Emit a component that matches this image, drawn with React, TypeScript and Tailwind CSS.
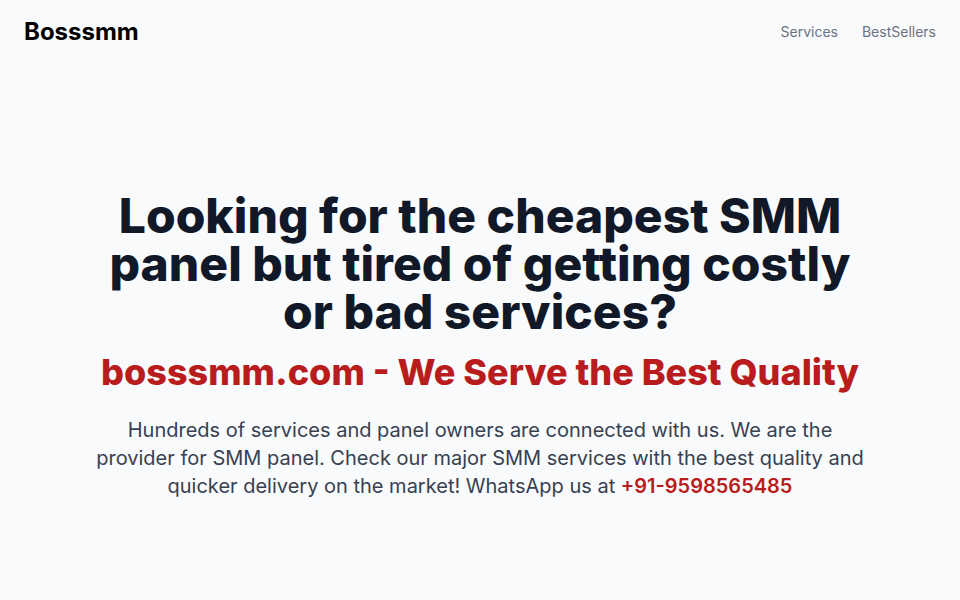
export default function App() {
  return (
    <div className="min-h-screen bg-[#f9fafb] font-['Inter',sans-serif] text-[#111827]">
      <header className="flex h-16 items-center justify-between px-6">
        <span className="text-2xl font-bold text-black">Bosssmm</span>
        <nav className="flex items-center gap-6 text-sm text-[#6b7280]">
          <a href="#">Services</a>
          <a href="#">BestSellers</a>
        </nav>
      </header>

      <main className="flex flex-col items-center px-6 pt-32 text-center">
        <h1 className="max-w-3xl text-5xl leading-none font-extrabold text-[#111827]">
          Looking for the cheapest SMM panel but tired of getting costly or bad services?
        </h1>
        <h2 className="mt-4 text-4xl font-extrabold text-[#b91c1c]">
          bosssmm.com - We Serve the Best Quality
        </h2>
        <p className="mt-6 max-w-3xl text-xl text-[#374151]">
          Hundreds of services and panel owners are connected with us. We are the provider for SMM panel. Check our major SMM services with the best quality and quicker delivery on the market! WhatsApp us at{' '}
          <span className="font-semibold text-[#b91c1c]">+91-9598565485</span>
        </p>
      </main>
    </div>
  );
}
